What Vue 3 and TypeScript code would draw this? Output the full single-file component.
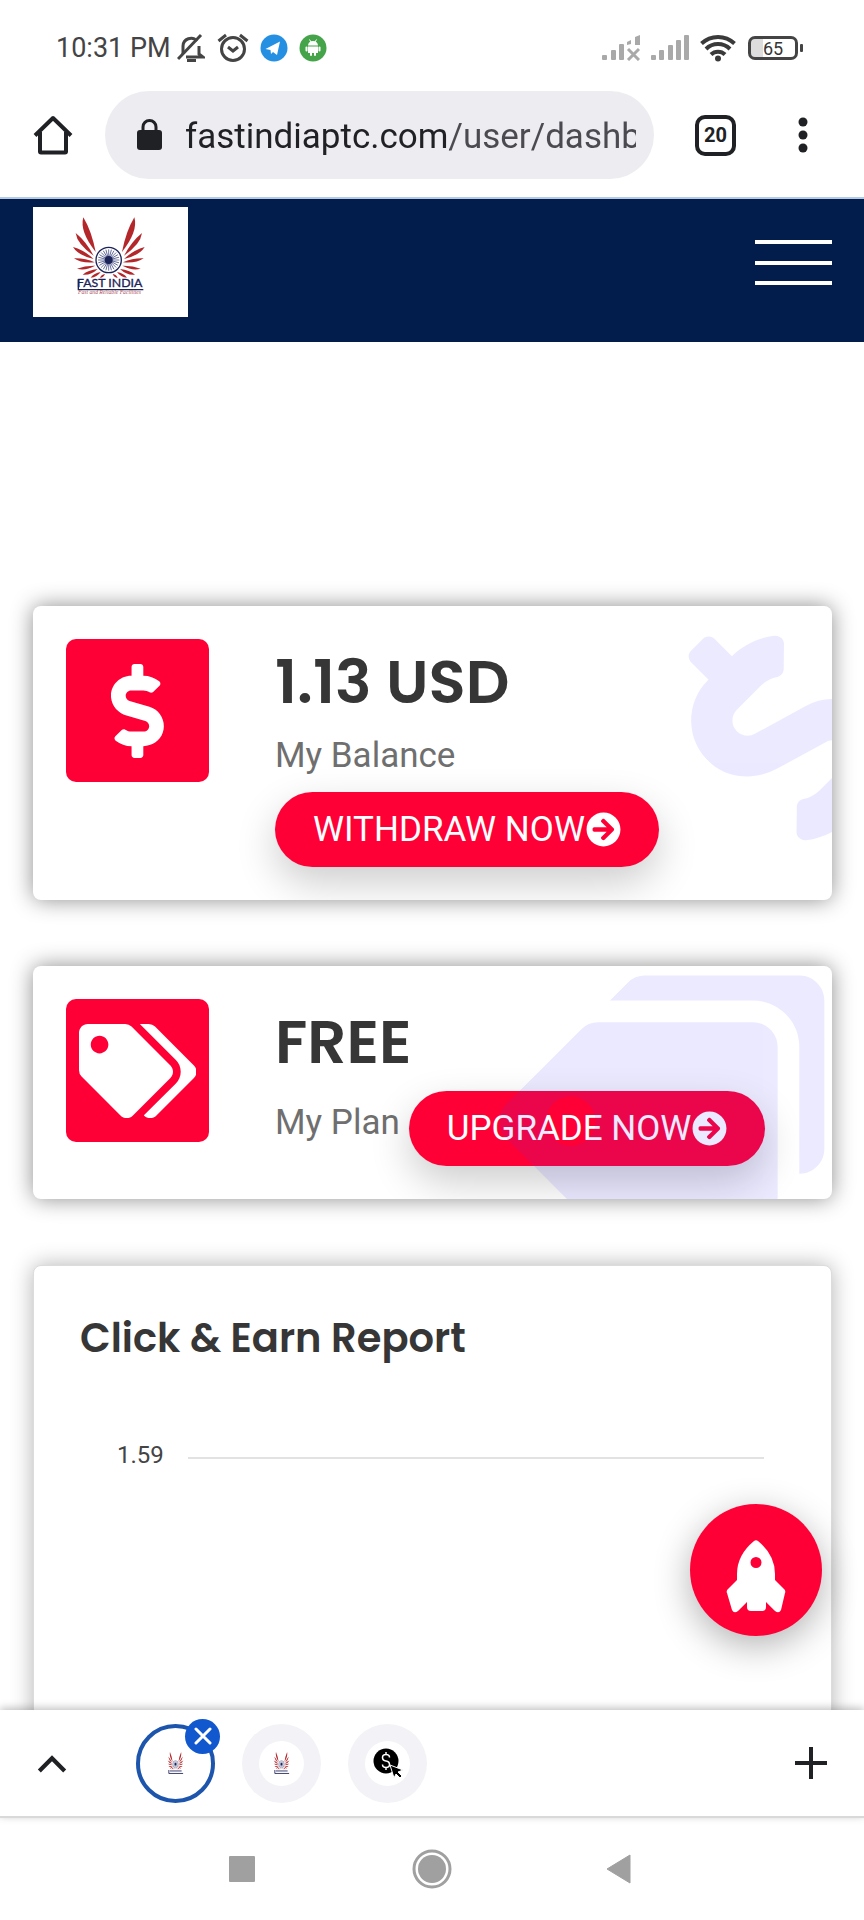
<script setup lang="ts">
import { ref } from 'vue'

interface Stat {
  id: string
  icon: 'dollar' | 'tags'
  viewBox: string
  value: string
  label: string
  action: string
  inline: boolean
}

const address = ref('fastindiaptc.com/user/dashboard')

const icons = {
  dollar:
    'M209.2 233.4l-108-31.6C88.7 198.2 80 186.5 80 173.5c0-16.3 13.2-29.5 29.5-29.5h66.3c12.2 0 24.2 3.7 34.2 10.5 6.1 4.1 14.3 3.1 19.5-2l34.8-34c7.1-6.9 6.1-18.4-1.8-24.5C238 74.8 207.4 64.1 176 64V16c0-8.8-7.2-16-16-16h-32c-8.8 0-16 7.2-16 16v48h-2.5C45.8 64-5.4 118.7.5 183.6c4.2 46.1 39.4 83.6 83.8 96.6l102.5 30c12.5 3.7 21.2 15.3 21.2 28.3 0 16.3-13.2 29.5-29.5 29.5h-66.3C100 368 88 364.3 78 357.5c-6.1-4.1-14.3-3.1-19.5 2l-34.8 34c-7.1 6.9-6.1 18.4 1.8 24.5 24.5 19.2 55.1 29.9 86.5 30v48c0 8.8 7.2 16 16 16h32c8.8 0 16-7.2 16-16v-48.2c46.6-.9 90.3-28.6 105.7-72.7 21.5-61.6-14.6-124.8-72.5-141.7z',
  tags: 'M497.941 225.941L286.059 14.059A48 48 0 0 0 252.118 0H48C21.49 0 0 21.49 0 48v204.118a48 48 0 0 0 14.059 33.941l211.882 211.882c18.744 18.745 49.136 18.746 67.882 0l204.118-204.118c18.745-18.745 18.745-49.137 0-67.882zM112 160c-26.51 0-48-21.49-48-48s21.49-48 48-48 48 21.49 48 48-21.49 48-48 48zm513.941 133.823L421.823 497.941c-18.745 18.745-49.137 18.745-67.882 0l-.36-.36L527.64 323.522c16.999-16.999 26.362-39.6 26.362-63.64s-9.362-46.641-26.362-63.64L331.397 0h48.721a48 48 0 0 1 33.941 14.059l211.882 211.882c18.745 18.745 18.745 49.137 0 67.882z',
  arrow:
    'M256 8c137 0 248 111 248 248S393 504 256 504 8 393 8 256 119 8 256 8zm-28.9 143.6l75.5 72.4H120c-13.3 0-24 10.7-24 24v16c0 13.3 10.7 24 24 24h182.6l-75.5 72.4c-9.7 9.3-9.9 24.8-.4 34.3l11 10.9c9.4 9.4 24.6 9.4 33.9 0L404.3 273c9.4-9.4 9.4-24.6 0-33.9L271.6 106.3c-9.4-9.4-24.6-9.4-33.9 0l-11 10.9c-9.5 9.6-9.3 25.1.4 34.4z',
}

const stats: Stat[] = [
  { id: 'balance', icon: 'dollar', viewBox: '0 0 288 512', value: '1.13 USD', label: 'My Balance', action: 'WITHDRAW NOW', inline: false },
  { id: 'plan', icon: 'tags', viewBox: '0 0 640 512', value: 'FREE', label: 'My Plan', action: 'UPGRADE NOW', inline: true },
]

const feathers = [
  'M250 82Q238 124 287 186Q275 124 250 82Z',
  'M227 129Q231 162 281 197Q258 154 227 129Z',
  'M219 171Q234 196 281 207Q254 181 219 171Z',
  'M222 205Q242 220 284 217Q256 204 222 205Z',
  'M231 236Q256 243 286 227Q256 226 231 236Z',
  'M248 254Q272 257 293 237Q264 240 248 254Z',
  'M272 263Q291 262 302 246Q282 249 272 263Z',
  'M300 264Q311 263 315 252Q303 254 300 264Z',
]
const spokes = Array.from({ length: 24 }, (_, i) => i * 15)
</script>

<template>
  <div class="screen">
    <svg class="defs" aria-hidden="true">
      <defs>
        <g id="feather-wing" fill="#b3262a">
          <path v-for="d in feathers" :key="d" :d="d" />
        </g>
        <g id="emblem">
          <use href="#feather-wing" />
          <use href="#feather-wing" transform="translate(653 0) scale(-1 1)" />
          <circle cx="326" cy="210" r="38" fill="#fff" stroke="#1b2258" stroke-width="4" />
          <g stroke="#2a3474" stroke-width="2">
            <line v-for="a in spokes" :key="a" x1="326" y1="210" x2="326" y2="178" :transform="`rotate(${a} 326 210)`" />
          </g>
          <circle cx="326" cy="210" r="12" fill="#1b2258" />
        </g>
      </defs>
    </svg>

    <div class="status">
      <span class="clock">10:31 PM</span>
      <svg class="s-bell" viewBox="0 0 28 30" fill="none" stroke="#444" stroke-width="3">
        <path d="M6 21V13a8 8 0 0 1 14-5M22 13v8l4 3H9" />
        <path d="M24 2 1 26" />
        <path d="M10 27.500h9" stroke-width="3" />
      </svg>
      <svg class="s-alarm" viewBox="0 0 32 30" fill="none" stroke="#444" stroke-width="3">
        <circle cx="16" cy="16" r="11.500" />
        <path d="M1.500 8 9 2M30.500 8 23 2" />
        <path d="m11 14 5 4 5-4" />
      </svg>
      <svg class="s-app" viewBox="0 0 28 28">
        <circle cx="14" cy="14" r="13.500" fill="#2590e2" />
        <path d="M5.500 15 20 7.500 17 21l-4-3-2 2-.5-4z" fill="#fff" />
      </svg>
      <svg class="s-app" viewBox="0 0 28 28">
        <circle cx="14" cy="14" r="13.500" fill="#45a449" />
        <g fill="#fff">
          <path d="M9 11.500a5 4.500 0 0 1 10 0zM9 12.500h10V19H9z" />
          <rect x="6.500" y="12.500" width="2" height="5" rx="1" />
          <rect x="19.500" y="12.500" width="2" height="5" rx="1" />
          <rect x="11" y="18" width="2" height="4" rx="1" />
          <rect x="15" y="18" width="2" height="4" rx="1" />
        </g>
        <path d="m10.500 5.500 1.500 2.500M17.500 5.500 16 8" stroke="#fff" />
      </svg>
      <span class="grow"></span>
      <svg class="s-signal" viewBox="0 0 38 26" fill="#a9a9a9">
        <rect y="20" width="5" height="5" rx="1" />
        <rect x="9" y="15" width="5" height="10" rx="1" />
        <rect x="17" y="9" width="5" height="16" rx="1" />
        <path d="M25 7l4-2v4l-4 1zM33 2l5-2v10h-5z" />
        <path d="m26 14 11 11M37 14 26 25" stroke="#a9a9a9" stroke-width="3" />
      </svg>
      <svg class="s-signal" viewBox="0 0 38 26" fill="#a9a9a9">
        <rect y="20" width="5" height="5" rx="1" />
        <rect x="8" y="15" width="5" height="10" rx="1" />
        <rect x="17" y="10" width="5" height="15" rx="1" />
        <rect x="25" y="5" width="5" height="20" rx="1" />
        <rect x="33" width="5" height="25" rx="1" />
      </svg>
      <svg class="s-wifi" viewBox="0 0 36 28" fill="none" stroke="#3a3a3a" stroke-width="4">
        <path d="M1.500 9.500a24 24 0 0 1 33 0M6 15a17 17 0 0 1 24 0M11 20.500a10 10 0 0 1 14 0" />
        <circle cx="18" cy="24.500" r="3" fill="#3a3a3a" stroke="none" />
      </svg>
      <span class="battery">65</span>
    </div>

    <div class="browser">
      <button class="bare" aria-label="Home">
        <svg class="i-home" viewBox="0 0 40 40" fill="none" stroke="#202124" stroke-width="4">
          <path d="M2 20.500 20 3l18 17.500M7 17v19.500q0 1 1 1h24q1 0 1-1V17" stroke-linejoin="round" />
        </svg>
      </button>
      <label class="omnibox">
        <svg class="i-lock" viewBox="0 0 25 32">
          <rect y="11" width="25" height="20" rx="3" fill="#202124" />
          <path d="M6 12V8a6.500 6.500 0 0 1 13 0v4" fill="none" stroke="#202124" stroke-width="3" />
        </svg>
        <input v-model="address" type="text" aria-label="Address" spellcheck="false" />
      </label>
      <button class="tab-count" aria-label="20 open tabs">20</button>
      <button class="bare menu" aria-label="More options">
        <svg class="i-dots" viewBox="0 0 10 36" fill="#202124">
          <circle cx="5" cy="5" r="4.500" /><circle cx="5" cy="18" r="4.500" /><circle cx="5" cy="31" r="4.500" />
        </svg>
      </button>
    </div>

    <header class="site-bar">
      <a class="logo" href="#" aria-label="Fast India">
        <svg viewBox="99 51 465 330">
          <use href="#emblem" />
          <text x="231" y="291" fill="#1b2258" stroke="#1b2258" stroke-width="1" font-family="Lato, sans-serif" font-size="37">FAST INDIA</text>
          <path d="M235 268v31h195" fill="none" stroke="#1b2258" stroke-width="4" />
          <text x="234" y="313" fill="#b0505a" font-family="Liberation Serif, serif" font-style="italic" font-size="17">Fast and Reliable Facilities</text>
        </svg>
      </a>
      <button class="burger" aria-label="Open menu"><i></i><i></i><i></i></button>
    </header>

    <main class="page">
      <section v-for="s in stats" :key="s.id" class="stat" :class="{ inline: s.inline }">
        <div class="tile">
          <svg :viewBox="s.viewBox" fill="#fff"><path :d="icons[s.icon]" /></svg>
        </div>
        <div class="info">
          <h2>{{ s.value }}</h2>
          <div class="line">
            <span class="label">{{ s.label }}</span>
            <a class="pill" href="#">{{ s.action }}<svg viewBox="0 0 512 512" fill="#fff"><path :d="icons.arrow" /></svg></a>
          </div>
        </div>
        <svg class="watermark" :viewBox="s.viewBox" fill="#4634ff"><path :d="icons[s.icon]" /></svg>
      </section>

      <section class="report">
        <h3>Click &amp; Earn Report</h3>
        <div class="axis"><span>1.59</span><hr /></div>
      </section>

      <button class="fab" aria-label="Back to top">
        <svg viewBox="0 0 60 74" fill="#fff">
          <path
            fill-rule="evenodd"
            d="M28 1q2-1.500 4 0 17 14 17 33v6l9 9q2 2 1 4l-4 17q-2 4-6 1l-9-9v5q0 4-4 4H25q-4 0-4-4v-5l-9 9q-4 3-6-1L1 53q-1-2 1-4l9-9v-6Q11 15 28 1zM30 17a5.500 5.500 0 1 0 0 11 5.500 5.500 0 0 0 0-11z"
          />
        </svg>
      </button>
    </main>

    <nav class="tabs" aria-label="Open tabs">
      <button class="bare expand" aria-label="Expand tabs">
        <svg viewBox="0 0 28 18" fill="none" stroke="#202124" stroke-width="4"><path d="m2 16 12-12 12 12" /></svg>
      </button>
      <button class="tab active" aria-label="Fast India tab">
        <svg viewBox="210 72 232 250" preserveAspectRatio="none">
          <use href="#emblem" />
          <path d="M235 270v36h195M250 280h160" fill="none" stroke="#1b2258" stroke-width="10" />
        </svg>
        <span class="close">
          <svg viewBox="0 0 18 18" stroke="#fff" stroke-width="3" stroke-linecap="round"><path d="m2 2 14 14M16 2 2 16" /></svg>
        </span>
      </button>
      <button class="tab" aria-label="Fast India tab">
        <span class="favicon">
          <svg viewBox="210 72 232 250" preserveAspectRatio="none">
            <use href="#emblem" />
            <path d="M235 270v36h195M250 280h160" fill="none" stroke="#1b2258" stroke-width="10" />
          </svg>
        </span>
      </button>
      <button class="tab" aria-label="Pay per click tab">
        <span class="favicon">
          <svg class="ppc" viewBox="0 0 30 30">
            <circle cx="13" cy="13" r="12.500" fill="#000" />
            <path d="M16.500 9.500q0-3-3.500-3t-3.500 3 3.500 3.500 3.500 3.500-3.500 3-3.500-3M13 4v3M13 19v3" fill="none" stroke="#fff" stroke-width="1.500" />
            <path d="m17 17 13 5-5 2 4 4-2 2-4-4-2 4z" fill="#000" stroke="#fff" />
          </svg>
        </span>
      </button>
      <span class="grow"></span>
      <button class="bare add" aria-label="New tab">
        <svg viewBox="0 0 32 32" stroke="#202124" stroke-width="4"><path d="M16 0v32M0 16h32" /></svg>
      </button>
    </nav>

    <nav class="system" aria-label="System navigation">
      <button class="bare" aria-label="Recent apps">
        <svg viewBox="0 0 40 40"><rect x="7" y="7" width="26" height="26" rx="1" fill="#a0a0a0" /></svg>
      </button>
      <button class="bare" aria-label="Home screen">
        <svg viewBox="0 0 40 40">
          <circle cx="20" cy="20" r="18" fill="none" stroke="#a0a0a0" stroke-width="3" />
          <circle cx="20" cy="20" r="14" fill="#a0a0a0" />
        </svg>
      </button>
      <button class="bare" aria-label="Back">
        <svg viewBox="0 0 40 40"><path d="M5 20 28 6v28z" fill="#a0a0a0" stroke="#a0a0a0" stroke-linejoin="round" /></svg>
      </button>
    </nav>
  </div>
</template>

<style>
body {
  margin: 0;
  background: #fff;
}
</style>

<style scoped>
* {
  box-sizing: border-box;
}
.screen {
  display: flex;
  flex-direction: column;
  height: 100vh;
  overflow: hidden;
  background: #fff;
  font-family: Roboto, 'Liberation Sans', sans-serif;
  color: #363636;
}
.defs {
  position: absolute;
  width: 0;
  height: 0;
}
svg {
  display: block;
  flex: none;
}
button {
  font: inherit;
  color: inherit;
  cursor: pointer;
}
.bare {
  padding: 0;
  border: 0;
  background: none;
}
.grow {
  flex: 1;
}

/* status bar */
.status {
  display: flex;
  align-items: center;
  flex: none;
  height: 91px;
  padding: 4px 66px 0 56px;
}
.clock {
  font-size: 27px;
  line-height: 32px;
  color: #444;
}
.s-bell {
  width: 28px;
  height: 30px;
  margin-left: 6px;
}
.s-alarm {
  width: 32px;
  height: 30px;
  margin-left: 12px;
}
.s-app {
  width: 28px;
  height: 28px;
  margin-left: 11px;
}
.s-signal {
  width: 38px;
  height: 26px;
  margin-right: 11px;
}
.s-wifi {
  width: 36px;
  height: 28px;
  margin-right: 12px;
}
.battery {
  position: relative;
  width: 50px;
  height: 24px;
  border: 3px solid #444;
  border-radius: 7px;
  background: linear-gradient(90deg, #ddd 12px, #fff 12px);
  font-size: 18px;
  line-height: 19px;
  text-align: center;
}
.battery::after {
  content: '';
  position: absolute;
  right: -8px;
  top: 5px;
  width: 3px;
  height: 8px;
  border-radius: 1px;
  background: #444;
}

/* address bar */
.browser {
  display: flex;
  align-items: center;
  flex: none;
  height: 106px;
  padding: 0 56px 18px 33px;
}
.i-home {
  width: 40px;
  height: 40px;
}
.omnibox {
  display: flex;
  align-items: center;
  flex: 1;
  min-width: 0;
  height: 88px;
  margin: 0 41px 0 32px;
  padding: 0 18px 0 32px;
  border-radius: 44px;
  background: #edecf1;
}
.i-lock {
  width: 25px;
  height: 32px;
  margin-right: 23px;
}
.omnibox input {
  flex: 1;
  min-width: 0;
  height: 50px;
  padding: 2px 0 0;
  border: 0;
  outline: 0;
  font: 35px/48px Roboto, 'Liberation Sans', sans-serif;
  color: #2c2d30;
  background: linear-gradient(90deg, #202124 265px, #4a4a50 265px);
  background-clip: text;
  -webkit-background-clip: text;
  -webkit-text-fill-color: transparent;
}
.tab-count {
  width: 41px;
  height: 41px;
  padding: 0;
  border: 4px solid #202124;
  border-radius: 10px;
  background: #fff;
  font-size: 20px;
  font-weight: 700;
  line-height: 31px;
  color: #202124;
}
.menu {
  margin-left: 62px;
}
.i-dots {
  width: 10px;
  height: 36px;
}

/* site header */
.site-bar {
  display: flex;
  align-items: flex-start;
  justify-content: space-between;
  flex: none;
  height: 145px;
  padding: 8px 32px 0 33px;
  border-top: 2px solid #b4cbe2;
  background: #021c4b;
}
.logo {
  width: 155px;
  height: 110px;
  background: #fff;
}
.logo svg {
  width: 155px;
  height: 110px;
}
.burger {
  display: flex;
  flex-direction: column;
  justify-content: space-between;
  width: 77px;
  height: 45px;
  margin-top: 33px;
  padding: 0;
  border: 0;
  background: none;
}
.burger i {
  height: 4px;
  background: #fff;
}

/* page */
.page {
  position: relative;
  display: flex;
  flex-direction: column;
  flex: 1;
  gap: 66px;
  min-height: 0;
  padding: 264px 32px 0 33px;
  overflow: hidden;
}
.stat {
  position: relative;
  display: flex;
  align-items: flex-start;
  flex: none;
  gap: 66px;
  padding: 33px;
  overflow: hidden;
  border-radius: 8px;
  background: #fff;
  box-shadow: 0 0 22px rgba(0, 0, 0, 0.45);
}
.tile {
  display: flex;
  align-items: center;
  justify-content: center;
  flex: none;
  width: 143px;
  height: 143px;
  border-radius: 10px;
  background: #ff0036;
}
.tile svg {
  height: 94px;
}
.info {
  flex: 1;
  min-width: 0;
}
h2,
h3 {
  margin: 0;
  font-family: Poppins, Inter, sans-serif;
  font-weight: 600;
  color: #363636;
}
h2 {
  padding-top: 8px;
  font-size: 61px;
  line-height: 70px;
}
.line {
  display: flex;
  flex-direction: column;
  align-items: flex-start;
}
.label {
  padding: 15px 0 13px;
  font-size: 35px;
  line-height: 47px;
  color: #6f6f6f;
}
.pill {
  display: flex;
  align-items: center;
  gap: 1px;
  height: 75px;
  padding: 0 38px;
  border-radius: 38px;
  background: #ff0036;
  box-shadow: 0 16px 40px rgba(0, 0, 0, 0.2);
  font-size: 35px;
  line-height: 40px;
  color: #fff;
  text-decoration: none;
  white-space: nowrap;
}
.pill svg {
  width: 35px;
  height: 35px;
}
.inline .line {
  flex-direction: row;
  gap: 9px;
  padding-top: 14px;
}
.inline .label {
  padding: 8px 0 0;
}
.watermark {
  position: absolute;
  top: 0;
  right: -32px;
  height: 264px;
  opacity: 0.1;
  transform: rotate(-45deg);
  pointer-events: none;
}
.report {
  flex: none;
  min-height: 600px;
  padding: 47px 67px 0 46px;
  border: 1px solid #dcdcdc;
  border-radius: 8px;
  background: #fff;
  box-shadow: 0 0 22px rgba(0, 0, 0, 0.3);
}
h3 {
  font-size: 40px;
  line-height: 50px;
}
.axis {
  display: flex;
  align-items: center;
  gap: 24px;
  margin-top: 76px;
  padding-left: 37px;
  font-size: 24px;
  line-height: 32px;
  color: #444;
}
.axis hr {
  flex: 1;
  height: 2px;
  margin: 6px 0 0;
  border: 0;
  background: #e2e2e2;
}
.fab {
  position: absolute;
  right: 42px;
  bottom: 74px;
  display: flex;
  justify-content: center;
  align-items: center;
  width: 132px;
  height: 132px;
  padding: 14px 0 0;
  border: 0;
  border-radius: 50%;
  background: #ff0036;
  box-shadow: 0 10px 36px rgba(0, 0, 0, 0.3);
}
.fab svg {
  width: 60px;
  height: 74px;
}

/* tab strip */
.tabs {
  position: relative;
  display: flex;
  align-items: center;
  flex: none;
  height: 108px;
  padding: 0 37px;
  border-bottom: 2px solid #d9d9d9;
  background: #fff;
  box-shadow: 0 -2px 8px rgba(0, 0, 0, 0.25);
}
.expand {
  margin-right: 69px;
}
.expand svg {
  width: 30px;
  height: 19px;
}
.tab {
  position: relative;
  display: flex;
  align-items: center;
  justify-content: center;
  width: 79px;
  height: 79px;
  margin-right: 27px;
  padding: 0;
  border: 0;
  border-radius: 50%;
  background: #f3f3f7;
}
.tab.active {
  border: 4px solid #1d55ad;
  background: #fff;
}
.tab svg {
  width: 17px;
  height: 24px;
}
.favicon {
  display: flex;
  align-items: center;
  justify-content: center;
  width: 45px;
  height: 45px;
  border-radius: 50%;
  background: #fff;
}
.tab .ppc {
  width: 30px;
  height: 30px;
}
.close {
  position: absolute;
  top: -9px;
  right: -9px;
  display: flex;
  align-items: center;
  justify-content: center;
  width: 35px;
  height: 35px;
  border-radius: 50%;
  background: #1158cf;
}
.tab .close svg {
  width: 18px;
  height: 18px;
}
.add svg {
  width: 32px;
  height: 32px;
}

/* system navigation */
.system {
  display: flex;
  justify-content: center;
  align-items: center;
  flex: none;
  gap: 150px;
  height: 102px;
  background: #fff;
}
.system svg {
  width: 40px;
  height: 40px;
}
</style>
